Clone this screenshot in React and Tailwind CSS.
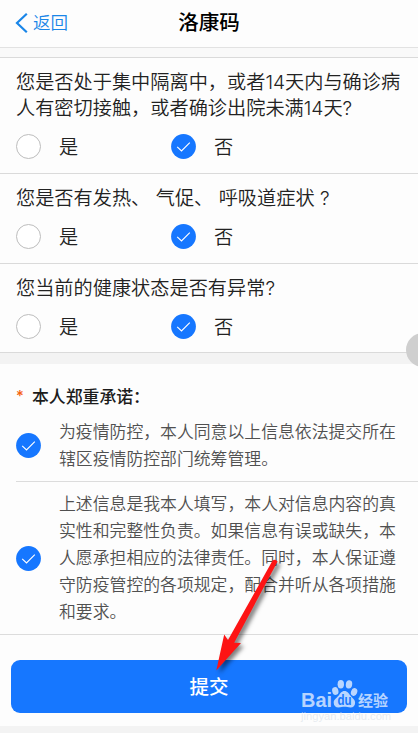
import { Fragment } from "react";

const QUESTIONS = [
  { lines: ["您是否处于集中隔离中，或者14天内与确诊病", "人有密切接触，或者确诊出院未满14天?"], height: "h-[116px]" },
  { lines: ["您是否有发热、 气促、 呼吸道症状 ?"], height: "h-[90px]" },
  { lines: ["您当前的健康状态是否有异常?"], height: "h-[89px]" },
];

const PROMISES = [
  {
    lines: ["为疫情防控，本人同意以上信息依法提交所在", "辖区疫情防控部门统筹管理。"],
    box: "ml-4 h-[71px] border-b border-[#dcdcdc] pt-[8px]",
    check: "mt-[14px]",
  },
  {
    lines: [
      "上述信息是我本人填写，本人对信息内容的真",
      "实性和完整性负责。如果信息有误或缺失，本",
      "人愿承担相应的法律责任。同时，本人保证遵",
      "守防疫管控的各项规定，配合并听从各项措施",
      "和要求。",
    ],
    box: "pl-4 h-[153px] border-b border-[#dcdcdc] pt-[9px]",
    check: "mt-[55px]",
  },
];

function Checked({ className = "" }) {
  return (
    <svg className={`w-[25px] h-[25px] shrink-0 ${className}`} viewBox="0 0 25 25" fill="none">
      <circle cx="12.5" cy="12.5" r="12.4" fill="#1677ff"/>
      <path d="M6.2 12.8 10.5 17 18.8 8.6" stroke="#fff" strokeWidth="1.15"/>
    </svg>
  );
}

function Question({ lines, height }) {
  return (
    <section className={`${height} shrink-0 px-4 pt-[11px] border-b border-[#dadada] text-[19.2px] font-[350] text-[#222]`}>
      {lines.map((line) => (
        <p key={line} className="leading-[26px] whitespace-pre">{line}</p>
      ))}
      <div className="flex items-center mt-[13px] h-[25px]">
        <div className="flex items-center w-[155px]">
          <span className="w-[25px] h-[25px] rounded-full border border-[#bdbdbd] bg-white"/>
          <span className="ml-[18px] pt-[2px] leading-[25px]">是</span>
        </div>
        <Checked/>
        <span className="ml-[18px] pt-[2px] leading-[25px]">否</span>
      </div>
    </section>
  );
}

function Watermark() {
  return (
    <div className="absolute left-[301px] top-[678px] w-[92px] h-[46px] text-white/70">
      <svg width="92" height="32" viewBox="0 0 92 32" fill="currentColor">
        <text x="0" y="28.5" fontSize="20" fontWeight="700" fontFamily="Liberation Sans, sans-serif" textLength="31" lengthAdjust="spacingAndGlyphs">Bai</text>
        <ellipse cx="34.3" cy="13" rx="3.1" ry="4" transform="rotate(-15 34.3 13)"/>
        <ellipse cx="39.8" cy="6.2" rx="3.2" ry="4.2"/>
        <ellipse cx="48" cy="6.4" rx="3.2" ry="4.2" transform="rotate(8 48 6.4)"/>
        <ellipse cx="53.1" cy="14" rx="3.1" ry="4" transform="rotate(20 53.1 14)"/>
        <path d="M43.5 13c-3 0-4.3 2.6-6 4.8-2 2.4-4.8 3.7-4.8 7 0 3 2 4.7 4.8 4.7 2.2 0 4-.7 6-.7s3.8.7 6 .7c2.8 0 4.6-1.7 4.6-4.7 0-3.3-2.6-4.6-4.6-7-1.7-2.2-3-4.8-6-4.8z"/>
        <text x="36.5" y="27" fontSize="14" fontWeight="700" fill="#1677ff" fontFamily="Liberation Sans, sans-serif" textLength="14" lengthAdjust="spacingAndGlyphs">du</text>
        <text x="57" y="27.5" fontSize="15" fontWeight="700" fontFamily="Noto Sans CJK SC, sans-serif">经验</text>
      </svg>
      <span className="absolute left-0 top-[33px] text-[11.2px] leading-[10px] text-[#d8dde6]/60 font-['Liberation_Sans',sans-serif]">jingyan.baidu.com</span>
    </div>
  );
}

function Arrow() {
  return (
    <svg className="absolute left-[205px] top-[550px] drop-shadow-[3px_3px_2px_rgba(0,0,0,0.5)]" width="85" height="130" viewBox="205 550 85 130">
      <path d="M272.6 560.5Q275.5 558.5 277.6 561.5L234.2 642.7 241 643 216.3 670.5 224.2 634.5 228 640Z" fill="#fd1414"/>
    </svg>
  );
}

export default function App() {
  return (
    <div className="relative w-[418px] h-[733px] overflow-hidden flex flex-col bg-[#fdfdfd] font-['Inter','Noto_Sans_CJK_SC',sans-serif]">
      <header className="h-[48px] shrink-0 grid grid-cols-3 items-center border-b border-[#e2e2e2]">
        <div className="flex items-center pl-[15px] pb-px text-[#1a86e8]">
          <svg width="13" height="20" viewBox="0 0 13 20" fill="none">
            <path d="M11.8.8 2 10l9.8 9.2" stroke="currentColor" strokeWidth="2.2"/>
          </svg>
          <span className="ml-[5px] text-[17.5px] font-[350] leading-6">返回</span>
        </div>
        <h1 className="text-center text-[20.5px] leading-6 font-medium text-black pb-px">洛康码</h1>
      </header>
      <div className="h-[10px] shrink-0 bg-[#f9f9f9] border-b border-[#dadada]"/>

      {QUESTIONS.map((q) => <Question key={q.lines[0]} {...q}/>)}
      <div className="h-[11px] shrink-0 bg-[#f3f3f3]"/>

      <h2 className="h-[47px] shrink-0 flex items-center pl-4 pt-[20px] text-[16.85px] font-medium text-[#1c1c1c]">
        <span className="w-4 pb-0.5 text-[#f5620f] text-[15px]">*</span>本人郑重承诺：
      </h2>
      {PROMISES.map(({ lines, box, check }) => (
        <div key={lines[0]} className={`flex items-start shrink-0 ${box}`}>
          <Checked className={check}/>
          <p className="ml-[18px] text-[16.85px] font-[350] leading-[27px] text-[#505050] whitespace-nowrap">
            {lines.map((line) => <Fragment key={line}>{line}<br/></Fragment>)}
          </p>
        </div>
      ))}

      <button className="mt-[25px] ml-[11px] mr-[11px] h-[53px] pt-[3px] shrink-0 rounded-[9px] bg-[#1677ff] text-white text-[19.5px] font-medium leading-none">提交</button>
      <div className="mt-[13px] flex-1 bg-[#f3f3f3]"/>

      <span className="absolute left-[406px] top-[333px] w-[34px] h-[34px] rounded-full bg-[#cfcfcf]"/>
      <Watermark/>
      <Arrow/>
    </div>
  );
}
